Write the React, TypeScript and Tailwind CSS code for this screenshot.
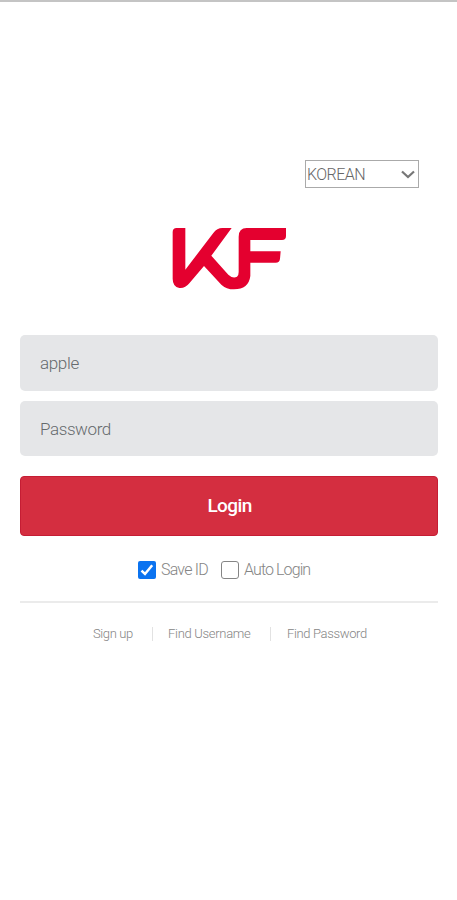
import React, { useState } from "react";

function Logo() {
  return (
    <svg
      className="mx-auto mt-[39px] block h-[63px] w-[115px]"
      viewBox="36 35 345 189"
      fill="#e4002f"
      aria-label="KF"
    >
      <path d="M38 50Q38 38 50 38H76V163L160 53Q171 38 187 38H215L154 121L205 178Q219 191 231 184Q236 181 236 170V64Q236 38 260 38H378V62Q378 74 366 74H271V108H362L360 130Q359 142 347 142H271V182Q266 222 222 222Q199 222 184 208L132 152L88 204Q75 220 58 218Q38 214 38 190Z" />
    </svg>
  );
}

function CheckOption({
  label,
  labelClass,
  checked,
  onChange,
}: {
  label: string;
  labelClass: string;
  checked: boolean;
  onChange: () => void;
}) {
  return (
    <label className="flex items-center">
      <input
        type="checkbox"
        className="sr-only"
        checked={checked}
        onChange={onChange}
      />
      {checked ? (
        <span className="flex h-[18px] w-[18px] items-center justify-center rounded-[2px] bg-[#0b73f0]">
          <svg
            className="h-[18px] w-[18px]"
            viewBox="0 0 18 18"
            fill="none"
            stroke="white"
            strokeWidth="2.5"
          >
            <path d="M3.5 9.6L7 13L14.2 4.2" />
          </svg>
        </span>
      ) : (
        <span className="h-[18px] w-[18px] rounded-[3px] border border-[#858585] bg-white"></span>
      )}
      <span
        className={
          "ml-[5px] block h-6 whitespace-nowrap text-[16px] leading-[23px] font-light text-[#858585] " +
          labelClass
        }
      >
        {label}
      </span>
    </label>
  );
}

function App() {
  const [username, setUsername] = useState("apple");
  const [password, setPassword] = useState("");
  const [saveId, setSaveId] = useState(true);
  const [autoLogin, setAutoLogin] = useState(false);

  return (
    <div className="h-[900px] w-full border-t-2 border-[#c4c4c4] bg-white pr-[19px] pl-5 font-['Roboto','Noto_Sans',sans-serif]">
      <div className="flex justify-end pt-[158px] pr-[19px]">
        <button
          type="button"
          className="flex h-7 w-[114px] items-center justify-between border border-[#aaa] pr-[3px] pl-px text-[16px] font-light text-[#666]"
        >
          <span className="pt-px tracking-[-0.55px]">KOREAN</span>
          <svg
            className="h-[9px] w-[14px]"
            viewBox="0 0 14 9"
            fill="none"
            stroke="#777"
            strokeWidth="2.2"
          >
            <path d="M1 1.5L7 7L13 1.5" />
          </svg>
        </button>
      </div>

      <Logo />

      <form className="mt-[45px]" onSubmit={(e) => e.preventDefault()}>
        <input
          type="text"
          className="block h-[56px] w-full rounded-[5px] bg-[#e5e6e8] px-5 text-[17px] font-light tracking-[-0.35px] text-[#656a6d] outline-none"
          value={username}
          onChange={(e) => setUsername(e.target.value)}
        />
        <input
          type="password"
          placeholder="Password"
          className="mt-[10px] block h-[55px] w-full rounded-[5px] bg-[#e5e6e8] px-5 pt-px text-[17px] font-light tracking-[-0.4px] text-[#656a6d] outline-none placeholder:text-[#656a6d]"
          value={password}
          onChange={(e) => setPassword(e.target.value)}
        />
        <button
          type="submit"
          className="mt-5 block h-[60px] w-full rounded-[4px] border border-[#c51d34] bg-[#d42e40] pt-px pl-px text-[19px] font-medium tracking-[-0.6px] text-white"
        >
          Login
        </button>
      </form>

      <div className="mt-[22px] flex h-6 items-center pl-[118px]">
        <CheckOption
          label="Save ID"
          labelClass="w-[46px] tracking-[-0.8px]"
          checked={saveId}
          onChange={() => setSaveId(!saveId)}
        />
        <div className="w-[14px]"></div>
        <CheckOption
          label="Auto Login"
          labelClass="w-[68px] tracking-[-0.9px]"
          checked={autoLogin}
          onChange={() => setAutoLogin(!autoLogin)}
        />
      </div>

      <div className="mt-[19px] h-[2px] bg-[#ebebeb]"></div>

      <div className="mt-[21px] flex h-5 items-center pl-[73px] text-[13px] font-light whitespace-nowrap text-[#858585]">
        <a className="w-[59px] tracking-[-0.4px]">Sign up</a>
        <span className="h-[14px] w-px bg-[#e2e2e2]"></span>
        <a className="ml-[15px] w-[102px] tracking-[-0.3px]">Find Username</a>
        <span className="h-[14px] w-px bg-[#e2e2e2]"></span>
        <a className="ml-4 tracking-[-0.35px]">Find Password</a>
      </div>
    </div>
  );
}

export default App;
